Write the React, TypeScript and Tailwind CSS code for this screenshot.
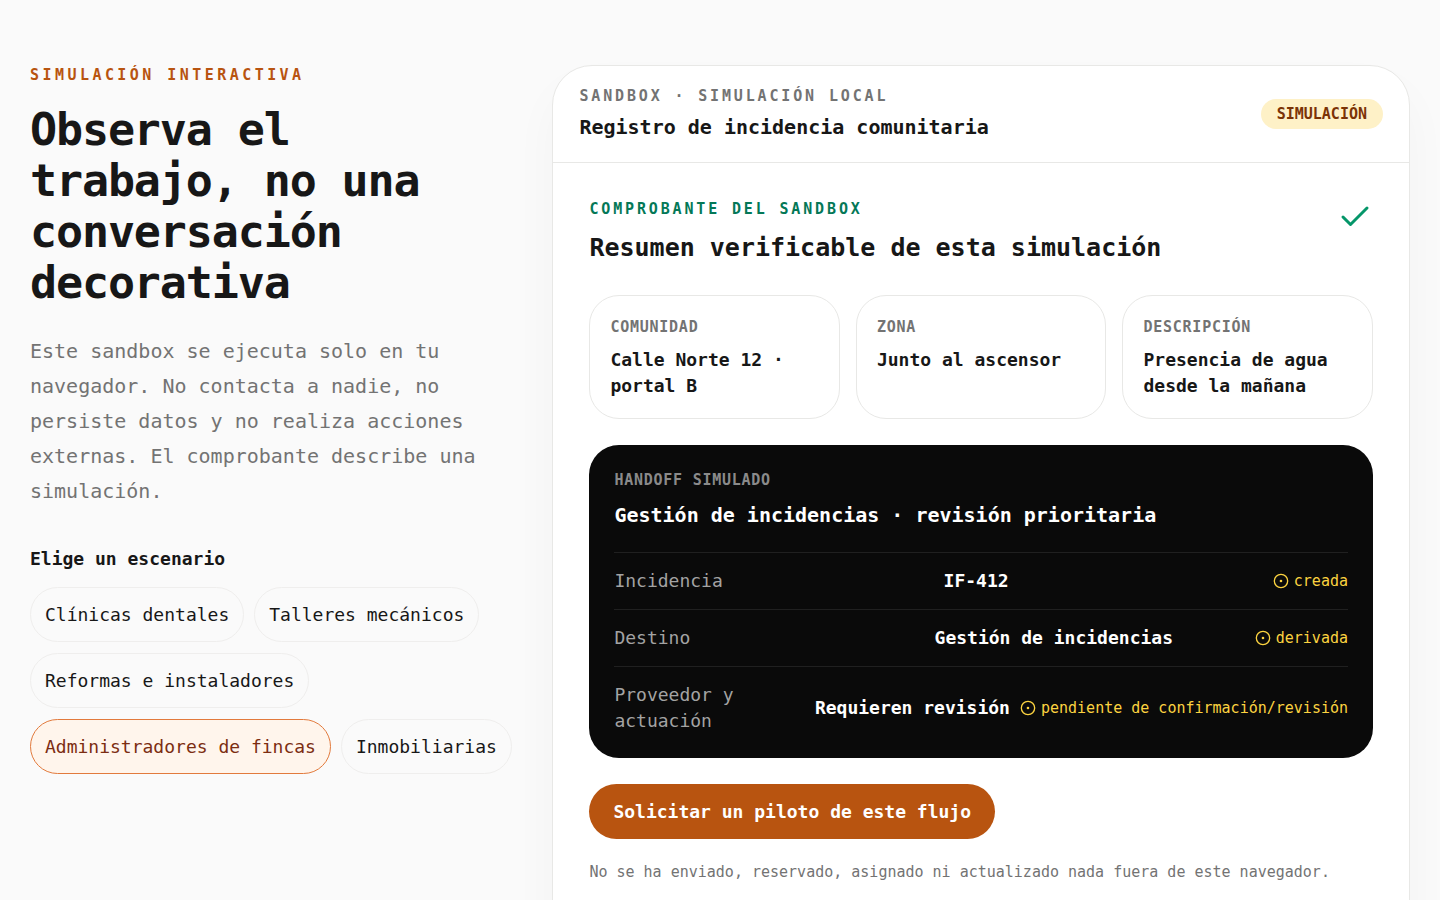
import { useState } from 'react';
import { Check, CircleDot } from 'lucide-react';

interface SummaryField {
  label: string;
  value: string;
}

interface HandoffRow {
  label: string;
  value: string;
  status: string;
}

const scenarios = [
  'Clínicas dentales',
  'Talleres mecánicos',
  'Reformas e instaladores',
  'Administradores de fincas',
  'Inmobiliarias',
];

const summary: SummaryField[] = [
  { label: 'Comunidad', value: 'Calle Norte 12 · portal B' },
  { label: 'Zona', value: 'Junto al ascensor' },
  { label: 'Descripción', value: 'Presencia de agua desde la mañana' },
];

const handoff: HandoffRow[] = [
  { label: 'Incidencia', value: 'IF-412', status: 'creada' },
  { label: 'Destino', value: 'Gestión de incidencias', status: 'derivada' },
  {
    label: 'Proveedor y actuación',
    value: 'Requieren revisión',
    status: 'pendiente de confirmación/revisión',
  },
];

const ScenarioPicker: React.FC = () => {
  const [selected, setSelected] = useState('Administradores de fincas');

  return (
    <fieldset className="mt-[37px]">
      <legend className="mb-4 text-[18px] leading-[25px] font-bold">Elige un escenario</legend>
      <div className="flex flex-wrap gap-x-2.5 gap-y-[11px]">
        {scenarios.map((scenario) => (
          <button
            key={scenario}
            type="button"
            aria-pressed={scenario === selected}
            onClick={() => setSelected(scenario)}
            className={`h-[55px] rounded-full border px-3.5 text-[18px] leading-[25px] ${
              scenario === selected
                ? 'border-[#e27a3c] bg-[#fff5ec] text-[#7c2d12]'
                : 'border-[#efeeed] text-[#171717]'
            }`}
          >
            {scenario}
          </button>
        ))}
      </div>
    </fieldset>
  );
};

// Field of the receipt
const SummaryCard: React.FC<{ field: SummaryField }> = ({ field }) => (
  <div className="rounded-[30px] border border-[#e8e8e6] px-5 pt-[21px] pb-[19px]">
    <dt className="text-[15px] leading-5 font-bold tracking-wider text-[#737373] uppercase">
      {field.label}
    </dt>
    <dd className="mt-2.5 text-[18px] leading-[26px] font-bold">{field.value}</dd>
  </div>
);

const HandoffPanel: React.FC = () => (
  <div className="mt-[26px] rounded-[30px] bg-[#0a0a0a] px-[25px] pt-[25px] pb-6 text-white">
    <p className="text-[15px] leading-5 font-bold tracking-wider text-[#8a8a8a] uppercase">
      Handoff simulado
    </p>
    <h4 className="mt-2.5 text-[20px] leading-[30px] font-bold">
      Gestión de incidencias · revisión prioritaria
    </h4>
    <ul className="mt-[22px]">
      {handoff.map((row) => (
        <li
          key={row.label}
          className="grid grid-cols-[1fr_1fr_auto] items-center gap-2.5 border-t border-[#202020] py-[15px] text-[18px] leading-[26px] last:pb-0"
        >
          <span className="text-[#a3a3a3]">{row.label}</span>
          <strong className="font-bold whitespace-nowrap">{row.value}</strong>
          <span className="flex items-center gap-[5px] text-[15px] leading-5 whitespace-nowrap text-[#fcd340]">
            <CircleDot size={16} strokeWidth={2} aria-hidden="true" />
            {row.status}
          </span>
        </li>
      ))}
    </ul>
  </div>
);

export default function App() {
  return (
    <main className="min-h-screen bg-[#fafafa] px-[30px] py-[65px] font-['DejaVu_Sans_Mono','Liberation_Mono',monospace] text-[#171717]">
      <section className="grid grid-cols-1 gap-10 lg:grid-cols-[9fr_16fr]">
        {/* Intro */}
        <div>
          <p className="text-[15px] leading-5 font-bold tracking-[0.23em] text-[#b85410] uppercase">
            Simulación interactiva
          </p>
          <h2 className="mt-[19px] text-[45px] leading-[51px] font-bold tracking-tight">
            Observa el trabajo, no una conversación decorativa
          </h2>
          <p className="mt-[26px] text-[20px] leading-[35px] text-[#737373]">
            Este sandbox se ejecuta solo en tu navegador. No contacta a nadie, no persiste datos y no
            realiza acciones externas. El comprobante describe una simulación.
          </p>
          <ScenarioPicker />
        </div>

        {/* Sandbox */}
        <article className="rounded-[40px] border border-[#e8e8e6] bg-white pb-10 shadow-[0_24px_48px_rgba(0,0,0,0.03)]">
          <header className="flex items-center justify-between border-b border-[#e8e8e6] px-[26px] py-5">
            <div>
              <p className="text-[15px] leading-5 font-bold tracking-[0.19em] text-[#737373] uppercase">
                Sandbox · simulación local
              </p>
              <h3 className="mt-1.5 text-[20px] leading-[30px] font-bold">
                Registro de incidencia comunitaria
              </h3>
            </div>
            <span className="rounded-full bg-[#fef1c7] px-4 py-[5px] text-[15px] leading-5 font-bold text-[#7b3306]">
              SIMULACIÓN
            </span>
          </header>

          <div className="p-9">
            <div className="flex items-start justify-between">
              <div>
                <p className="text-[15px] leading-5 font-bold tracking-[0.19em] text-[#047857] uppercase">
                  Comprobante del sandbox
                </p>
                <h3 className="mt-[11px] text-[25px] leading-[35px] font-bold">
                  Resumen verificable de esta simulación
                </h3>
              </div>
              <Check size={36} className="text-[#059669]" aria-hidden="true" />
            </div>

            <dl className="mt-[30px] grid grid-cols-1 gap-4 sm:grid-cols-3">
              {summary.map((field) => (
                <SummaryCard key={field.label} field={field} />
              ))}
            </dl>

            <HandoffPanel />

            <a
              href="#piloto"
              className="mt-[26px] inline-flex h-[55px] items-center rounded-full bg-[#b85410] px-6 text-[18px] leading-[25px] font-bold text-white"
            >
              Solicitar un piloto de este flujo
            </a>
            <p className="mt-[23px] text-[15px] leading-5 text-[#737373]">
              No se ha enviado, reservado, asignado ni actualizado nada fuera de este navegador.
            </p>
          </div>
        </article>
      </section>
    </main>
  );
}
